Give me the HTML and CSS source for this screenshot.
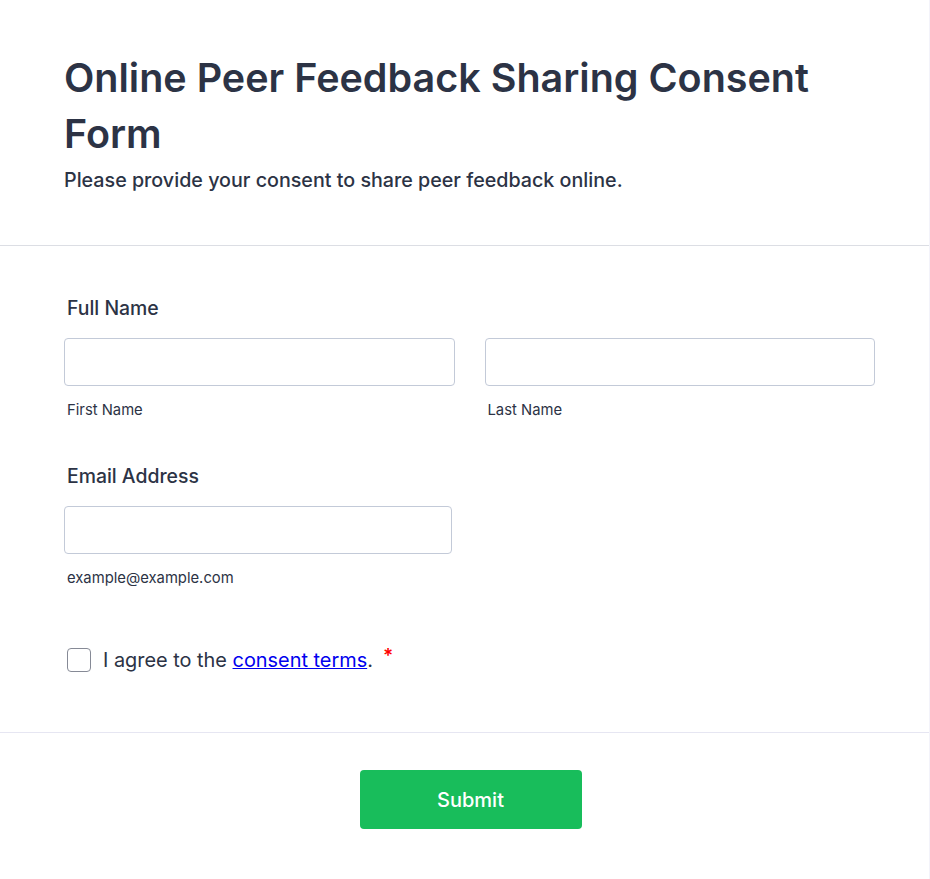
FILE: index.html
```html
<!DOCTYPE html>
<html lang="en">
<head>
<meta charset="utf-8">
<title>Online Peer Feedback Sharing Consent Form</title>
<link rel="stylesheet" href="styles.css">
</head>
<body>
<div class="page">
  <header class="header">
    <h1 class="title">Online Peer Feedback Sharing Consent Form</h1>
    <p class="subtitle">Please provide your consent to share peer feedback online.</p>
  </header>
  <form class="form">
    <div class="field">
      <label class="label">Full Name</label>
      <div class="row">
        <div class="col">
          <input class="input" type="text">
          <span class="sublabel">First Name</span>
        </div>
        <div class="col">
          <input class="input" type="text">
          <span class="sublabel">Last Name</span>
        </div>
      </div>
    </div>
    <div class="field field-email">
      <label class="label">Email Address</label>
      <div class="col email-col">
        <input class="input" type="email">
        <span class="sublabel">example@example.com</span>
      </div>
    </div>
    <div class="consent">
      <span class="checkbox"></span>
      <span class="consent-text">I agree to the <a href="#" class="link">consent terms</a>.</span>
      <span class="required">*</span>
    </div>
  </form>
  <div class="footer">
    <button class="submit" type="button">Submit</button>
  </div>
</div>
</body>
</html>
```
FILE: styles.css
```css
* { box-sizing: border-box; }
html, body { margin: 0; padding: 0; background: #fff; }
body {
  font-family: Inter, "Noto Sans", "Liberation Sans", sans-serif;
  color: #2c3345;
}
.page {
  width: 930px;
  min-height: 879px;
  border-right: 1px solid #f3f3fa;
}
.header {
  padding: 50px 64px 51px 64px;
  border-bottom: 1px solid #dcdee4;
}
.title {
  margin: 0;
  font-size: 39.5px;
  line-height: 56px;
  font-weight: 600;
  color: #2c3345;
}
.subtitle {
  margin: 4px 0 0 0;
  font-size: 19.7px;
  line-height: 28px;
  font-weight: 500;
  color: #2c3345;
}
.form {
  padding: 49px 54px 60px 64px;
  border-bottom: 1px solid #e6e6f2;
}
.field { display: flex; flex-direction: column; }
.field-email { margin-top: 43px; }
.label {
  margin-left: 3px;
  font-size: 19.4px;
  line-height: 26px;
  font-weight: 500;
  margin-bottom: 17px;
}
.row { display: flex; gap: 30px; }
.col { display: flex; flex-direction: column; flex: 1; }
.email-col { width: 388px; flex: none; }
.input {
  height: 48px;
  border: 1px solid #c3cad8;
  border-radius: 4px;
  background: #fff;
  width: 100%;
  font: inherit;
}
.sublabel {
  margin: 14px 0 0 3px;
  font-size: 14.8px;
  line-height: 20px;
  color: #2c3345;
}
.consent {
  margin-top: 60px;
  display: flex;
  align-items: center;
  padding-left: 3px;
}
.checkbox {
  width: 24px;
  height: 24px;
  border: 1.5px solid #868a96;
  border-radius: 4px;
  flex: none;
}
.consent-text {
  margin-left: 12px;
  font-size: 19.9px;
  line-height: 24px;
  color: #2c3345;
}
.link { color: #0000ee; text-decoration: underline; }
.required {
  color: #ff0000;
  font-size: 19px;
  font-weight: 600;
  margin-left: 10px;
  line-height: 24px;
  position: relative;
  top: -4px;
}
.footer {
  display: flex;
  justify-content: center;
  padding: 37px 0 0 12px;
}
.submit {
  width: 222px;
  height: 59px;
  border: none;
  border-radius: 4px;
  background: #18bd5b;
  color: #fff;
  font-family: inherit;
  font-size: 20px;
  font-weight: 500;
}
```
